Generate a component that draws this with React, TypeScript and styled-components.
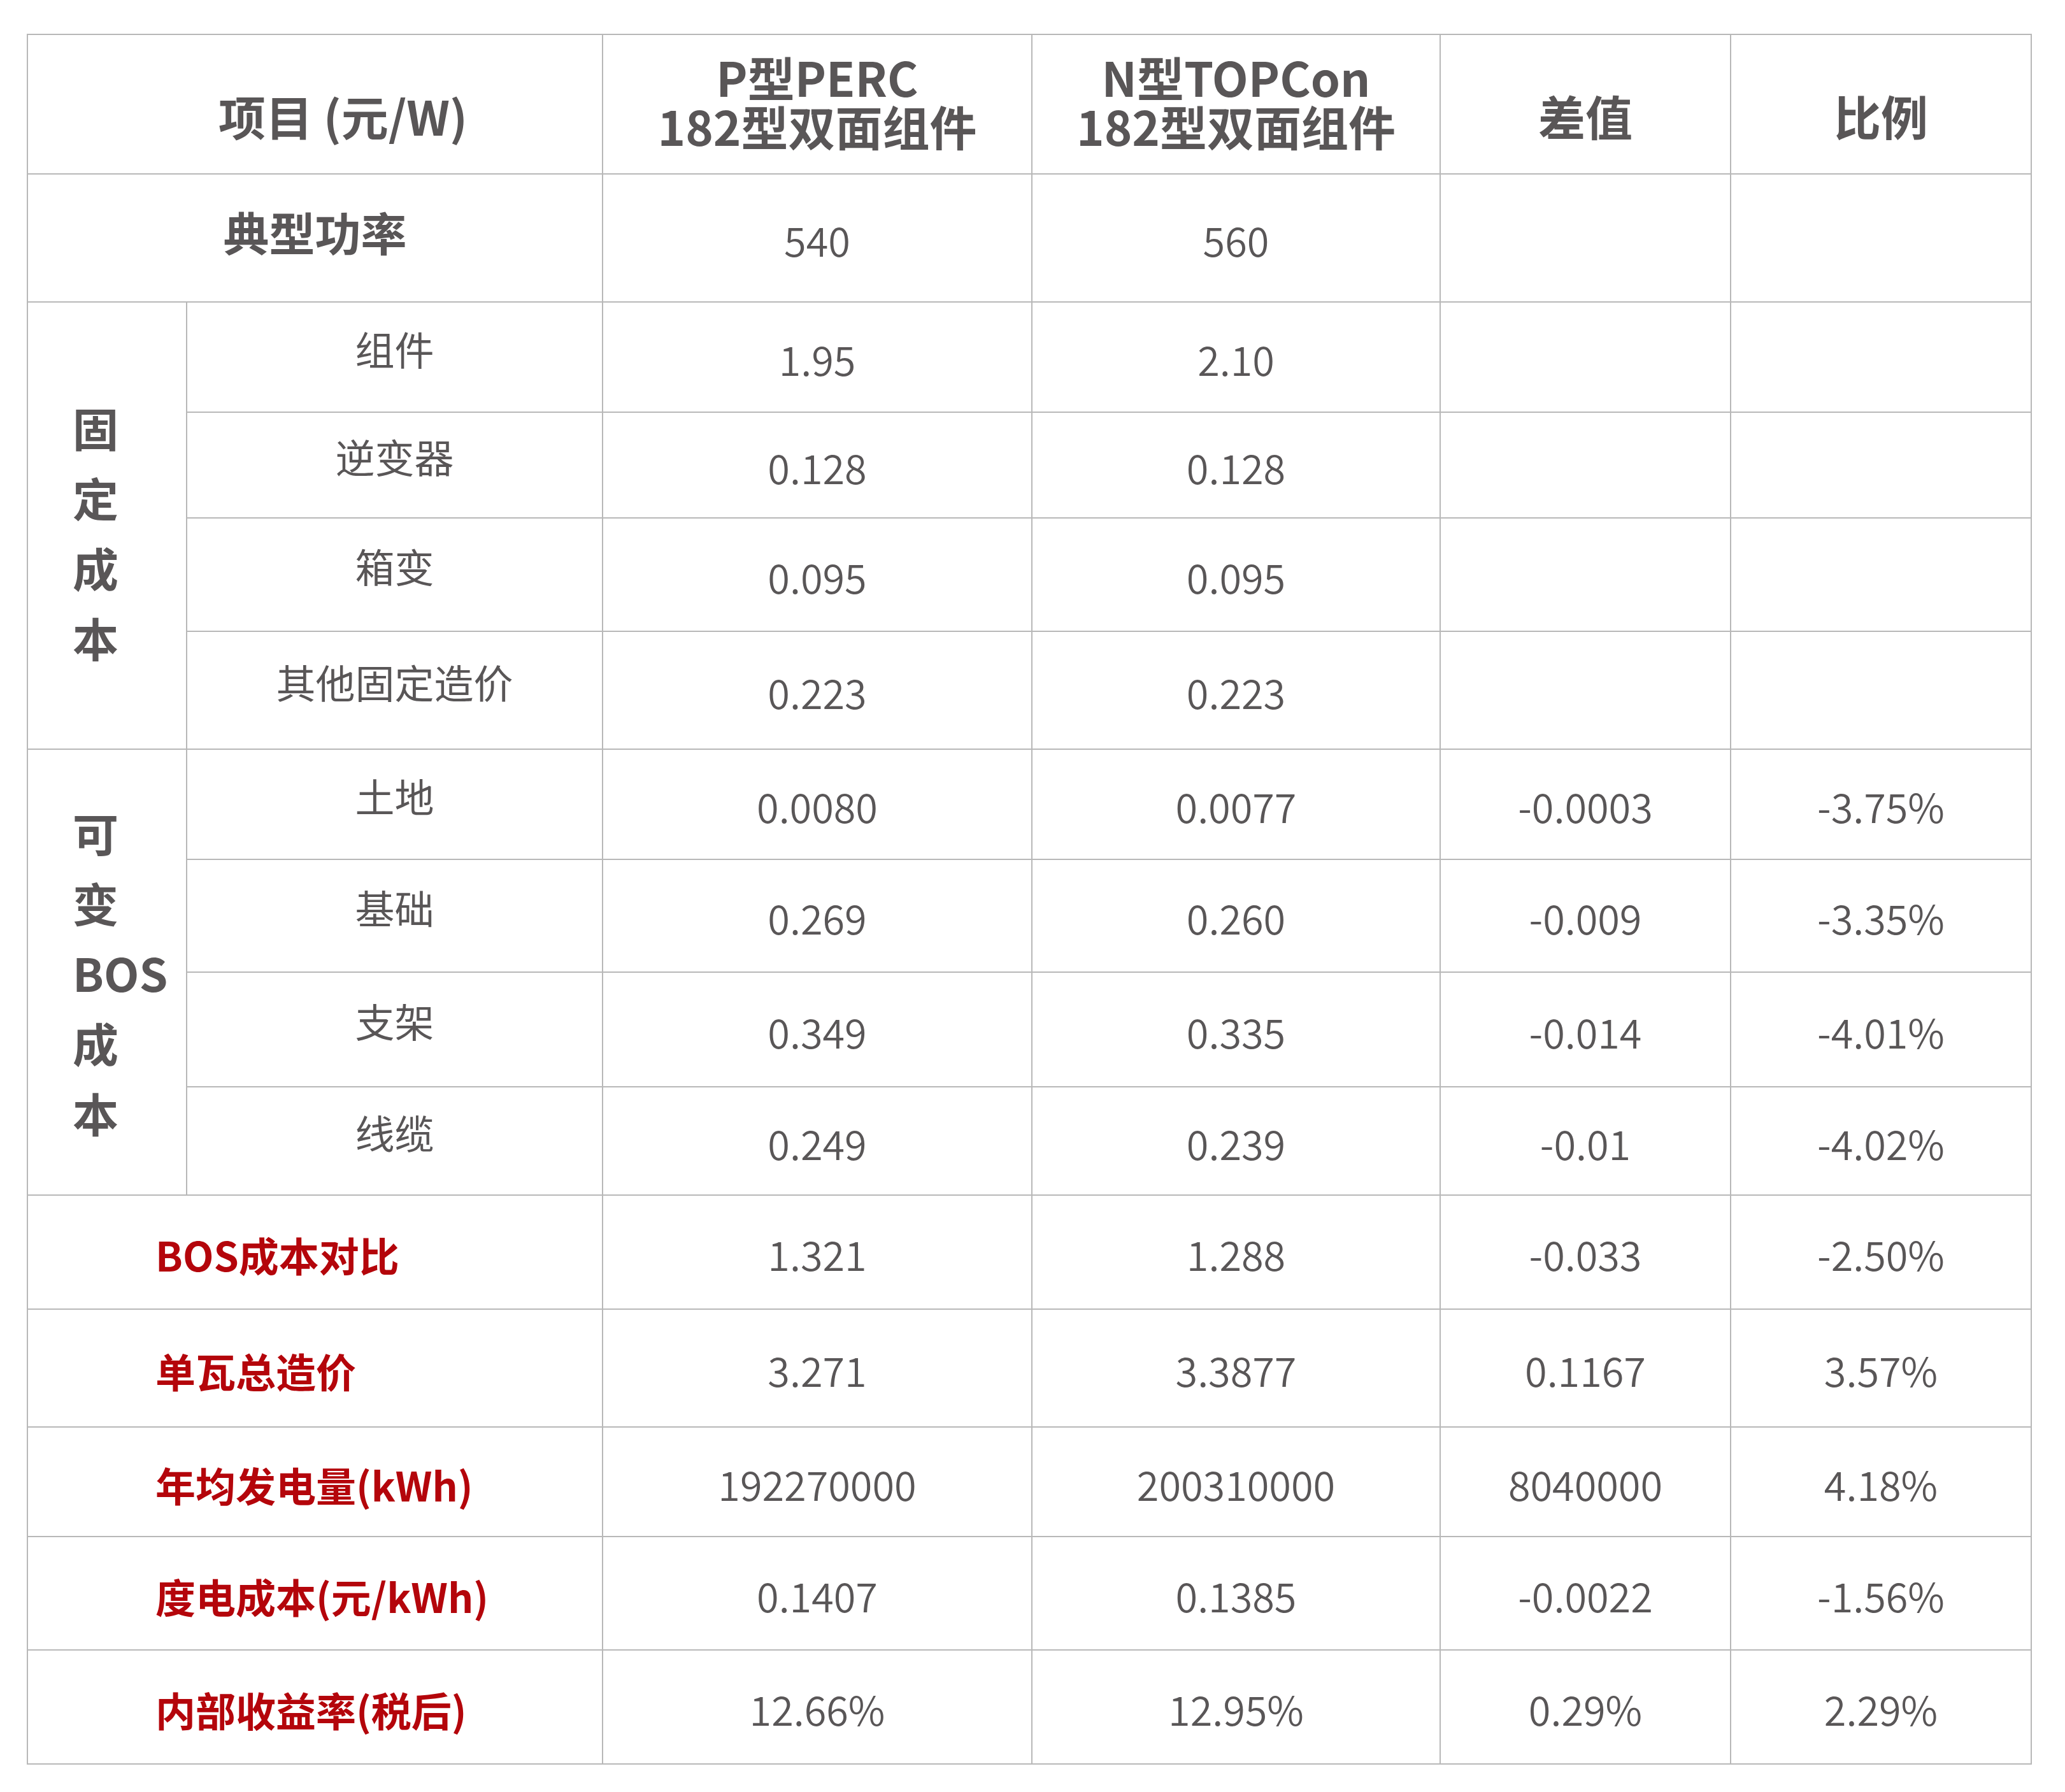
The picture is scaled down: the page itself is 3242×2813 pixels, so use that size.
import React from "react";
import styled, { createGlobalStyle } from "styled-components";

const GlobalStyle = createGlobalStyle`
  html, body { margin: 0; padding: 0; background: #ffffff; }
  body { font-family: "Noto Sans CJK SC", "Noto Sans", sans-serif; color: #595657; }
`;

const LINE = "#b8b8b8";
const TEXT = "#595657";
const RED = "#b4050b";

const Page = styled.div`
  padding: 53px 0 40px 42px;
`;

const Grid = styled.div`
  display: grid;
  width: max-content;
  grid-template-columns: 250px 653px 674px 641px 456px 472px;
  grid-template-rows: 219px 201px 173px 166px 178px 185px 173px 177px 180px 170px 179px 185px 172px 178px 179px;
  border-top: 2px solid ${LINE};
  border-left: 2px solid ${LINE};
`;

const Cell = styled.div<{ $span?: number; $rows?: number }>`
  box-sizing: border-box;
  border-right: 2px solid ${LINE};
  border-bottom: 2px solid ${LINE};
  display: flex;
  align-items: center;
  justify-content: center;
  text-align: center;
  grid-column: ${(p) => (p.$span ? `span ${p.$span}` : "auto")};
  grid-row: ${(p) => (p.$rows ? `span ${p.$rows}` : "auto")};
`;

const HeadCell = styled(Cell)<{ $single?: boolean; $indent?: number }>`
  font-size: 74px;
  font-weight: 700;
  line-height: 77px;
  color: ${TEXT};
  padding-top: ${(p) => (p.$single ? "34px" : "0")};
  padding-bottom: ${(p) => (p.$single ? "0" : "12px")};
  padding-left: ${(p) => p.$indent ?? 0}px;
`;

const HeadLine = styled.span`
  display: block;
  white-space: nowrap;
`;

const PowerLabel = styled(Cell)`
  font-size: 72px;
  font-weight: 700;
  color: ${TEXT};
  padding-bottom: 22px;
`;

const GroupCell = styled(Cell)`
  justify-content: flex-start;
  padding-left: 70px;
`;

const GroupText = styled.div<{ $shift: number }>`
  display: flex;
  flex-direction: column;
  align-items: flex-start;
  font-size: 72px;
  font-weight: 700;
  line-height: 110px;
  color: ${TEXT};
  margin-top: ${(p) => p.$shift}px;
`;

const SubLabel = styled(Cell)`
  font-size: 62px;
  font-weight: 400;
  color: ${TEXT};
  padding-bottom: 28px;
`;

const Value = styled(Cell)`
  font-size: 63px;
  font-weight: 350;
  color: ${TEXT};
  padding-top: 4px;
`;

const SummaryLabel = styled(Cell)`
  justify-content: flex-start;
  padding-left: 200px;
  padding-top: 6px;
  font-size: 63px;
  font-weight: 700;
  color: ${RED};
`;

type Item = { label: string; p: string; n: string; d: string; r: string };

const fixed: Item[] = [
  { label: "组件", p: "1.95", n: "2.10", d: "", r: "" },
  { label: "逆变器", p: "0.128", n: "0.128", d: "", r: "" },
  { label: "箱变", p: "0.095", n: "0.095", d: "", r: "" },
  { label: "其他固定造价", p: "0.223", n: "0.223", d: "", r: "" },
];

const variable: Item[] = [
  { label: "土地", p: "0.0080", n: "0.0077", d: "-0.0003", r: "-3.75%" },
  { label: "基础", p: "0.269", n: "0.260", d: "-0.009", r: "-3.35%" },
  { label: "支架", p: "0.349", n: "0.335", d: "-0.014", r: "-4.01%" },
  { label: "线缆", p: "0.249", n: "0.239", d: "-0.01", r: "-4.02%" },
];

const summary: Item[] = [
  { label: "BOS成本对比", p: "1.321", n: "1.288", d: "-0.033", r: "-2.50%" },
  { label: "单瓦总造价", p: "3.271", n: "3.3877", d: "0.1167", r: "3.57%" },
  { label: "年均发电量(kWh)", p: "192270000", n: "200310000", d: "8040000", r: "4.18%" },
  { label: "度电成本(元/kWh)", p: "0.1407", n: "0.1385", d: "-0.0022", r: "-1.56%" },
  { label: "内部收益率(税后)", p: "12.66%", n: "12.95%", d: "0.29%", r: "2.29%" },
];

const Values: React.FC<{ item: Item }> = ({ item }) => (
  <>
    <Value>{item.p}</Value>
    <Value>{item.n}</Value>
    <Value>{item.d}</Value>
    <Value>{item.r}</Value>
  </>
);

const Group: React.FC<{ lines: string[]; items: Item[]; shift: number }> = ({ lines, items, shift }) => (
  <>
    {items.map((item, i) => (
      <React.Fragment key={item.label}>
        {i === 0 && (
          <GroupCell $rows={items.length}>
            <GroupText $shift={shift}>
              {lines.map((l) => (
                <span key={l}>{l}</span>
              ))}
            </GroupText>
          </GroupCell>
        )}
        <SubLabel>{item.label}</SubLabel>
        <Values item={item} />
      </React.Fragment>
    ))}
  </>
);

export default function App() {
  return (
    <Page>
      <GlobalStyle />
      <Grid>
        <HeadCell $span={2} $single $indent={88}>项目 (元/W)</HeadCell>
        <HeadCell>
          <div>
            <HeadLine>P型PERC</HeadLine>
            <HeadLine>182型双面组件</HeadLine>
          </div>
        </HeadCell>
        <HeadCell>
          <div>
            <HeadLine>N型TOPCon</HeadLine>
            <HeadLine>182型双面组件</HeadLine>
          </div>
        </HeadCell>
        <HeadCell $single>差值</HeadCell>
        <HeadCell $single>比例</HeadCell>

        <PowerLabel $span={2}>典型功率</PowerLabel>
        <Value>540</Value>
        <Value>560</Value>
        <Value />
        <Value />

        <Group lines={["固", "定", "成", "本"]} items={fixed} shift={20} />
        <Group lines={["可", "变", "BOS", "成", "本"]} items={variable} shift={0} />

        {summary.map((item) => (
          <React.Fragment key={item.label}>
            <SummaryLabel $span={2}>{item.label}</SummaryLabel>
            <Values item={item} />
          </React.Fragment>
        ))}
      </Grid>
    </Page>
  );
}
